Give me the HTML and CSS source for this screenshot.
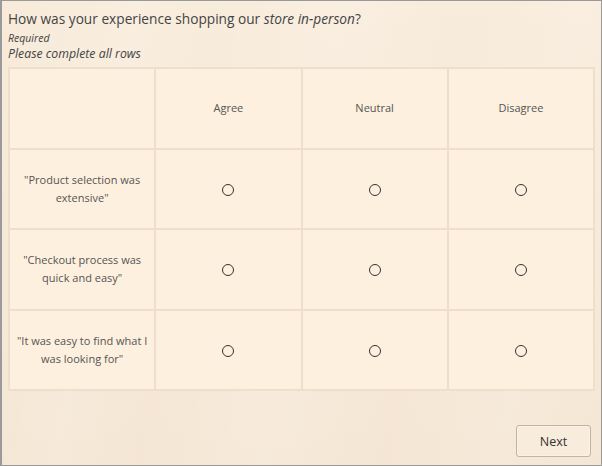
FILE: index.html
```html
<!DOCTYPE html>
<html>
<head>
<meta charset="utf-8">
<link rel="stylesheet" href="styles.css">
</head>
<body>
<div class="frame">
  <div class="question">How was your experience shopping our <em>store in-person</em>?</div>
  <div class="required">Required</div>
  <div class="hint">Please complete all rows</div>
  <table class="matrix">
    <tr class="head">
      <td></td>
      <td>Agree</td>
      <td>Neutral</td>
      <td>Disagree</td>
    </tr>
    <tr>
      <td class="label">"Product selection was extensive"</td>
      <td><span class="radio"></span></td>
      <td><span class="radio"></span></td>
      <td><span class="radio"></span></td>
    </tr>
    <tr>
      <td class="label">"Checkout process was quick and easy"</td>
      <td><span class="radio"></span></td>
      <td><span class="radio"></span></td>
      <td><span class="radio"></span></td>
    </tr>
    <tr>
      <td class="label">"It was easy to find what I was looking for"</td>
      <td><span class="radio"></span></td>
      <td><span class="radio"></span></td>
      <td><span class="radio"></span></td>
    </tr>
  </table>
  <div class="footer">
    <button class="next">Next</button>
  </div>
</div>
</body>
</html>
```

FILE: styles.css
```css
html, body {
  margin: 0;
  padding: 0;
}
body {
  width: 602px;
  height: 466px;
  overflow: hidden;
  font-family: "Open Sans", "Noto Sans", sans-serif;
}
.frame {
  box-sizing: border-box;
  width: 602px;
  height: 466px;
  border: 1px solid #9a9a9a;
  border-left-width: 2px;
  padding: 8px 7px 0 6px;
  background:
    linear-gradient(100deg, rgba(255,255,255,0) 0%, rgba(255,255,255,0.15) 20%, rgba(255,255,255,0.05) 32%, rgba(255,255,255,0.18) 50%, rgba(255,255,255,0.05) 68%, rgba(255,255,255,0.15) 85%, rgba(255,255,255,0.05) 100%),
    linear-gradient(180deg, #f8ebda 0%, #f4e5d2 100%);
  display: flex;
  flex-direction: column;
}
.question {
  font-size: 13.7px;
  line-height: 20px;
  color: #444;
}
.question em {
  font-style: italic;
}
.required {
  font-size: 10.5px;
  font-style: italic;
  line-height: 14px;
  color: #444;
  margin-top: 2px;
}
.hint {
  font-size: 12.3px;
  font-style: italic;
  line-height: 17px;
  color: #444;
}
.matrix {
  margin-top: 5px;
  width: 587px;
  border-collapse: collapse;
  table-layout: fixed;
  background: #fef0de;
}
.matrix td {
  border: 2px solid #efdfca;
  height: 78.5px;
  padding: 0 5px;
  text-align: center;
  vertical-align: middle;
  font-size: 11px;
  line-height: 18px;
  color: #555;
}
.radio {
  display: inline-block;
  width: 10px;
  height: 10px;
  border: 1.5px solid #333;
  border-radius: 50%;
  vertical-align: middle;
}
.footer {
  display: flex;
  justify-content: flex-end;
  padding-top: 34px;
  padding-right: 3px;
}
.next {
  width: 75px;
  height: 32px;
  border: 1px solid #c2b3a3;
  border-radius: 3px;
  background: #f8ecdc;
  font-family: "Open Sans", "Noto Sans", sans-serif;
  font-size: 12.5px;
  color: #333;
  box-shadow: inset 0 0 0 1px #fbf1e4;
}
```
